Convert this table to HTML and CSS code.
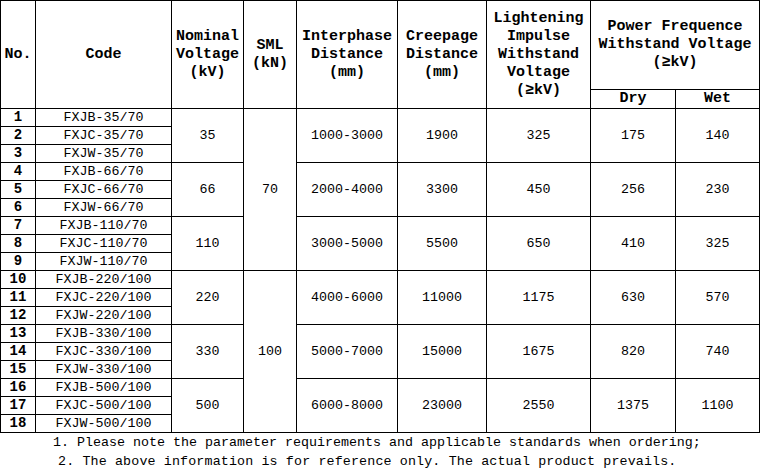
FILE: index.html
```html
<!DOCTYPE html>
<html>
<head>
<meta charset="utf-8">
<link rel="stylesheet" href="styles.css">
</head>
<body>
<table class="spec">
<colgroup>
<col class="c-no"><col class="c-code"><col class="c-nom"><col class="c-sml"><col class="c-inter"><col class="c-creep"><col class="c-light"><col class="c-dry"><col class="c-wet">
</colgroup>
<thead>
<tr class="h1">
<th rowspan="2">No.</th>
<th rowspan="2">Code</th>
<th rowspan="2">Nominal<br>Voltage<br>(kV)</th>
<th rowspan="2">SML<br>(kN)</th>
<th rowspan="2">Interphase<br>Distance<br>(mm)</th>
<th rowspan="2">Creepage<br>Distance<br>(mm)</th>
<th rowspan="2">Lightening<br>Impulse<br>Withstand<br>Voltage<br>(≥kV)</th>
<th colspan="2">Power Frequence<br>Withstand Voltage<br>(≥kV)</th>
</tr>
<tr class="h2">
<th>Dry</th>
<th>Wet</th>
</tr>
</thead>
<tbody>
<tr><td class="no">1</td><td>FXJB-35/70</td><td rowspan="3">35</td><td rowspan="9">70</td><td rowspan="3">1000-3000</td><td rowspan="3">1900</td><td rowspan="3">325</td><td rowspan="3">175</td><td rowspan="3">140</td></tr>
<tr><td class="no">2</td><td>FXJC-35/70</td></tr>
<tr><td class="no">3</td><td>FXJW-35/70</td></tr>
<tr><td class="no">4</td><td>FXJB-66/70</td><td rowspan="3">66</td><td rowspan="3">2000-4000</td><td rowspan="3">3300</td><td rowspan="3">450</td><td rowspan="3">256</td><td rowspan="3">230</td></tr>
<tr><td class="no">5</td><td>FXJC-66/70</td></tr>
<tr><td class="no">6</td><td>FXJW-66/70</td></tr>
<tr><td class="no">7</td><td>FXJB-110/70</td><td rowspan="3">110</td><td rowspan="3">3000-5000</td><td rowspan="3">5500</td><td rowspan="3">650</td><td rowspan="3">410</td><td rowspan="3">325</td></tr>
<tr><td class="no">8</td><td>FXJC-110/70</td></tr>
<tr><td class="no">9</td><td>FXJW-110/70</td></tr>
<tr><td class="no">10</td><td>FXJB-220/100</td><td rowspan="3">220</td><td rowspan="9">100</td><td rowspan="3">4000-6000</td><td rowspan="3">11000</td><td rowspan="3">1175</td><td rowspan="3">630</td><td rowspan="3">570</td></tr>
<tr><td class="no">11</td><td>FXJC-220/100</td></tr>
<tr><td class="no">12</td><td>FXJW-220/100</td></tr>
<tr><td class="no">13</td><td>FXJB-330/100</td><td rowspan="3">330</td><td rowspan="3">5000-7000</td><td rowspan="3">15000</td><td rowspan="3">1675</td><td rowspan="3">820</td><td rowspan="3">740</td></tr>
<tr><td class="no">14</td><td>FXJC-330/100</td></tr>
<tr><td class="no">15</td><td>FXJW-330/100</td></tr>
<tr><td class="no">16</td><td>FXJB-500/100</td><td rowspan="3">500</td><td rowspan="3">6000-8000</td><td rowspan="3">23000</td><td rowspan="3">2550</td><td rowspan="3">1375</td><td rowspan="3">1100</td></tr>
<tr><td class="no">17</td><td>FXJC-500/100</td></tr>
<tr><td class="no">18</td><td>FXJW-500/100</td></tr>
</tbody>
</table>
<div class="notes">
<p class="n1">1. Please note the parameter requirements and applicable standards when ordering;</p>
<p class="n2">2. The above information is for reference only. The actual product prevails.</p>
</div>
</body>
</html>
```
FILE: styles.css
```css
html, body {
  margin: 0;
  padding: 0;
  background: #fff;
}
body {
  font-family: "Liberation Mono", "DejaVu Sans Mono", monospace;
  color: #000;
}
.spec {
  border-collapse: collapse;
  table-layout: fixed;
  width: 760px;
}
.c-no { width: 35px; }
.c-code { width: 136px; }
.c-nom { width: 72px; }
.c-sml { width: 53px; }
.c-inter { width: 101px; }
.c-creep { width: 89px; }
.c-light { width: 104px; }
.c-dry { width: 85px; }
.c-wet { width: 84px; }
.spec th, .spec td {
  border: 1px solid #000;
  padding: 0;
  text-align: center;
  vertical-align: middle;
  white-space: nowrap;
  overflow: hidden;
}
.spec th {
  font-weight: bold;
  font-size: 15px;
  line-height: 18px;
}
.h1 { height: 89px; }
.h2 { height: 18px; }
.spec td {
  font-size: 13.33px;
  line-height: 17px;
  height: 17px;
}
.spec td.no {
  font-weight: bold;
  font-size: 14px;
}
.notes p {
  margin: 0;
  font-size: 13.33px;
  white-space: nowrap;
}
.n1 { padding-left: 53px; line-height: 20px; }
.n2 { padding-left: 58px; letter-spacing: 0.14px; line-height: 14px; padding-top: 2px; }
```
